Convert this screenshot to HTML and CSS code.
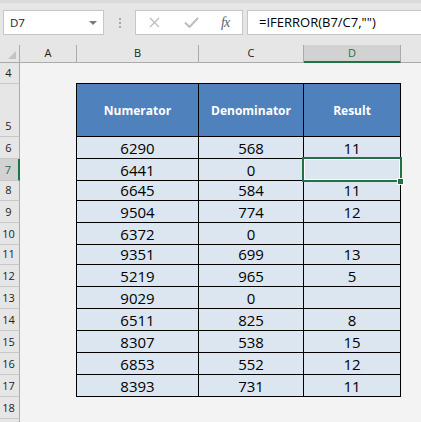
FILE: index.html
```html
<html>

<head>
	<title>IFERROR</title>
	<meta name="viewport" content="width=device-width, initial-scale=1.0">
	<link rel="stylesheet" href="styles.css">
</head>

<body>
	<div class="edge"></div>

	<div class="fbar">
		<div class="namebox">
			<span>D7</span>
			<span class="caret"></span>
		</div>
		<div class="grip"><i></i><i></i><i></i></div>
		<div class="fbtns">
			<svg class="btn-x" width="11" height="11" viewBox="0 0 11 11">
				<path d="M1 1 L10 10 M10 1 L1 10" stroke="#bdbdbd" stroke-width="1.3" fill="none" />
			</svg>
			<svg class="btn-ok" width="15" height="11" viewBox="0 0 15 11">
				<path d="M1 5.5 L5.5 10 L14 1" stroke="#bdbdbd" stroke-width="2" fill="none" />
			</svg>
			<span class="fx">fx</span>
		</div>
		<div class="formula">=IFERROR(B7/C7,"")</div>
	</div>

	<div class="colheads">
		<div class="corner"><span class="tri"></span></div>
		<div class="ch">A</div>
		<div class="ch">B</div>
		<div class="ch">C</div>
		<div class="ch sel">D</div>
		<div class="ch last"></div>
	</div>

	<div class="sheet">
		<div class="rowheads">
			<div class="rh h22">4</div>
			<div class="rh h53">5</div>
			<div class="rh h22">6</div>
			<div class="rh h22 sel">7</div>
			<div class="rh h20">8</div>
			<div class="rh h22">9</div>
			<div class="rh h22">10</div>
			<div class="rh h20">11</div>
			<div class="rh h22">12</div>
			<div class="rh h22">13</div>
			<div class="rh h22">14</div>
			<div class="rh h22">15</div>
			<div class="rh h22">16</div>
			<div class="rh h22">17</div>
			<div class="rh h22">18</div>
			<div class="rh h22"></div>
		</div>

		<div class="cells">
			<table class="data">
				<colgroup>
					<col class="colb">
					<col class="colc">
					<col class="cold">
				</colgroup>
				<tr class="head">
					<th>Numerator</th>
					<th>Denominator</th>
					<th>Result</th>
				</tr>
				<tr class="h22"><td>6290</td><td>568</td><td>11</td></tr>
				<tr class="h22"><td>6441</td><td>0</td><td class="active"><span class="selbox"></span><span class="handle"></span></td></tr>
				<tr class="h20"><td>6645</td><td>584</td><td>11</td></tr>
				<tr class="h22"><td>9504</td><td>774</td><td>12</td></tr>
				<tr class="h22"><td>6372</td><td>0</td><td></td></tr>
				<tr class="h20"><td>9351</td><td>699</td><td>13</td></tr>
				<tr class="h22"><td>5219</td><td>965</td><td>5</td></tr>
				<tr class="h22"><td>9029</td><td>0</td><td></td></tr>
				<tr class="h22"><td>6511</td><td>825</td><td>8</td></tr>
				<tr class="h22"><td>8307</td><td>538</td><td>15</td></tr>
				<tr class="h22"><td>6853</td><td>552</td><td>12</td></tr>
				<tr class="h22"><td>8393</td><td>731</td><td>11</td></tr>
			</table>
		</div>
	</div>
</body>

</html>
```

FILE: styles.css
```css
body {
	margin: 0;
	width: 421px;
	height: 422px;
	overflow: hidden;
	background-color: #e6e6e6;
	font-family: 'Open Sans', sans-serif;
	color: #222;
}

.edge {
	height: 10px;
	box-sizing: border-box;
	border-top: 3px solid #dadada;
}

/* formula bar */
.fbar {
	display: flex;
	height: 25px;
	margin-bottom: 10px;
}

.namebox {
	display: flex;
	align-items: center;
	justify-content: space-between;
	width: 101px;
	margin-left: 3px;
	box-sizing: border-box;
	border: 1px solid #c6c6c6;
	background-color: #fff;
	padding: 0 6px 0 6px;
	font-size: 11.5px;
}

.caret {
	width: 0;
	height: 0;
	border-left: 4px solid transparent;
	border-right: 4px solid transparent;
	border-top: 4px solid #7a7a7a;
}

.grip {
	width: 31px;
	display: flex;
	flex-direction: column;
	align-items: center;
	justify-content: center;
	gap: 2px;
}

.grip i {
	width: 2px;
	height: 2px;
	background-color: #a6a6a6;
}

.fbtns {
	display: flex;
	align-items: center;
	width: 108px;
	box-sizing: border-box;
	border: 1px solid #c6c6c6;
	background-color: #fff;
}

.btn-x {
	margin-left: 13px;
}

.btn-ok {
	margin-left: 24px;
}

.fx {
	margin-left: 22px;
	font-family: 'Liberation Serif', serif;
	font-style: italic;
	font-size: 14px;
	color: #5f5f5f;
	letter-spacing: -1px;
}

.formula {
	flex: 1;
	margin-left: 4px;
	box-sizing: border-box;
	border: 1px solid #c6c6c6;
	border-right: 0;
	background-color: #fff;
	padding-left: 11px;
	font-size: 13px;
	line-height: 23px;
	color: #000;
}

/* column headers */
.colheads {
	display: grid;
	grid-template-columns: 20px 57px 122px 105px 97px 1fr;
	height: 17px;
}

.corner,
.ch {
	box-sizing: border-box;
	border-right: 1px solid #ababab;
	border-bottom: 1px solid #ababab;
}

.corner {
	position: relative;
}

.tri {
	position: absolute;
	right: 3px;
	bottom: 3px;
	width: 0;
	height: 0;
	border-left: 8px solid transparent;
	border-bottom: 8px solid #c4c4c4;
}

.ch {
	text-align: center;
	font-size: 11px;
	line-height: 16px;
}

.ch.sel {
	background-color: #d2d2d2;
	border-bottom: 2px solid #217346;
	color: #217346;
}

.ch.last {
	border-right: 0;
}

/* sheet */
.sheet {
	display: flex;
	background-color: #f3f3f3;
	height: 360px;
	overflow: hidden;
}

.rowheads {
	width: 20px;
	background-color: #e6e6e6;
}

.rh {
	box-sizing: border-box;
	border-right: 1px solid #ababab;
	border-bottom: 1px solid #c8c8c8;
	display: flex;
	align-items: flex-end;
	justify-content: center;
	padding: 0 2px 2px 0;
	font-size: 11px;
	line-height: 16px;
}

.rh.sel {
	background-color: #d2d2d2;
	border-right: 2px solid #217346;
	color: #217346;
}

.h20 {
	height: 20px;
}

.h22 {
	height: 22px;
}

.h53 {
	height: 53px;
}

.cells {
	padding: 21px 0 0 56px;
}

.data {
	border-collapse: separate;
	border-spacing: 0;
	table-layout: fixed;
	width: 325px;
	border-top: 1px solid #000;
	border-left: 1px solid #000;
}

.colb {
	width: 122px;
}

.colc {
	width: 105px;
}

.cold {
	width: 97px;
}

.data th,
.data td {
	box-sizing: border-box;
	border-right: 1px solid #000;
	border-bottom: 1px solid #000;
	padding: 0;
	text-align: center;
}

.data th {
	height: 53px;
	background-color: #4f81bd;
	color: #fff;
	font-size: 12px;
	font-weight: bold;
	vertical-align: middle;
}

.data td {
	background-color: #dce6f1;
	color: #000;
	font-size: 15px;
	line-height: 16px;
	vertical-align: bottom;
	padding-bottom: 2px;
}

.data tr.h20 td {
	height: 20px;
}

.data tr.h22 td {
	height: 22px;
}

.data td.active {
	position: relative;
}

.selbox {
	position: absolute;
	left: -2px;
	top: -2px;
	width: 100px;
	height: 25px;
	box-sizing: border-box;
	border: 2px solid #217346;
	box-shadow: inset 0 0 0 1px #fff;
}

.handle {
	position: absolute;
	left: 93px;
	top: 19px;
	width: 7px;
	height: 7px;
	box-sizing: border-box;
	background-color: #217346;
	border: 1px solid #fff;
}
```
